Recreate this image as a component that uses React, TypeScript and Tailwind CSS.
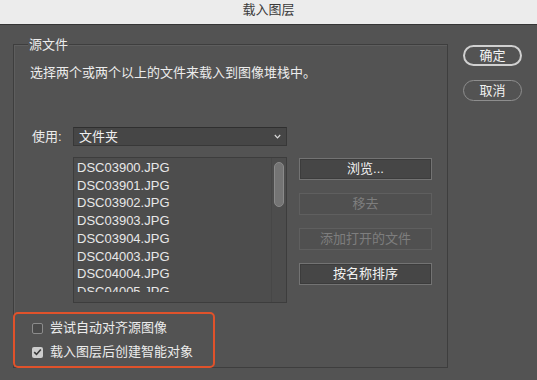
const FONT = "font-['Liberation_Sans','Noto_Sans_CJK_SC',sans-serif]";

const files = [
  "DSC03900.JPG",
  "DSC03901.JPG",
  "DSC03902.JPG",
  "DSC03903.JPG",
  "DSC03904.JPG",
  "DSC04003.JPG",
  "DSC04004.JPG",
  "DSC04005.JPG",
];

function SideButton({ label, disabled }: { label: string; disabled?: boolean }) {
  return (
    <div
      className={
        disabled
          ? "h-[22px] border border-[#5f5f5f] bg-[#505050] flex items-center justify-center text-[13px] text-[#7e7e7e]"
          : "h-[22px] border border-[#737373] bg-[#464646] shadow-[inset_0_0_0_1px_#3c3c3c] flex items-center justify-center text-[13px] text-[#f2f2f2]"
      }
    >
      {label}
    </div>
  );
}

function Check({ checked, label }: { checked?: boolean; label: string }) {
  return (
    <div className="flex items-center h-[18px]">
      {checked ? (
        <div className="w-[11px] h-[11px] rounded-[2px] bg-[#cdcdcd] flex items-center justify-center">
          <svg width="9" height="8" viewBox="0 0 9 8">
            <path d="M1.2 4.2 L3.5 6.4 L7.8 1.4" fill="none" stroke="#3a3a3a" strokeWidth="1.6" />
          </svg>
        </div>
      ) : (
        <div className="w-[11px] h-[11px] rounded-[2px] border border-[#8c8c8c] bg-[#4a4a4a]" />
      )}
      <span className="ml-[7px] text-[13px] leading-[18px] text-[#ececec]">{label}</span>
    </div>
  );
}

export default function App() {
  return (
    <div className={`w-[537px] h-[380px] bg-[#535353] overflow-hidden ${FONT}`}>
      {/* title bar */}
      <div className="h-[25px] bg-[#ececec] border-b border-[#353535] flex items-start justify-center">
        <span className="mt-[1px] text-[13px] leading-[18px] text-[#3a3a3a]">载入图层</span>
      </div>

      <div className="flex pl-[13px] pt-[19px]">
        {/* fieldset */}
        <div className="relative w-[435px] h-[324px] border border-[#3e3e3e] shadow-[inset_1px_1px_0_#5e5e5e]">
          <span className="absolute left-[14px] top-[-9px] px-[1px] bg-[#535353] text-[13px] leading-[18px] text-[#ececec]">
            源文件
          </span>

          <div className="flex flex-col">
            <div className="mt-[19px] ml-[16px] text-[13px] leading-[18px] text-[#ececec]">
              选择两个或两个以上的文件来载入到图像堆栈中。
            </div>

            <div className="mt-[45px] flex items-center h-[19px]">
              <span className="ml-[18px] w-[41px] text-[13px] leading-[18px] text-[#ececec]">使用:</span>
              <div className="w-[214px] h-[19px] bg-[#464646] border border-[#383838] border-t-[#2f2f2f] flex items-center justify-between pl-[5px] pr-[5px]">
                <span className="text-[13px] leading-[17px] text-[#f0f0f0]">文件夹</span>
                <svg width="7" height="5" viewBox="0 0 7 5">
                  <path d="M0.8 1 L3.5 3.8 L6.2 1" fill="none" stroke="#d8d8d8" strokeWidth="1.2" />
                </svg>
              </div>
            </div>

            <div className="mt-[11px] flex">
              <div className="ml-[59px] w-[214px] h-[146px] border border-[#3d3d3d] bg-[#4d4d4d] flex">
                <div className="flex-1 h-[134px] overflow-hidden pl-[3px] pt-[1px]">
                  {files.map((f) => (
                    <div key={f} className="text-[13px] leading-[17.7px] text-[#e8e8e8]">
                      {f}
                    </div>
                  ))}
                </div>
                <div className="w-[15px] border-l border-[#474747] pt-[4px] flex justify-center">
                  <div className="w-[10px] h-[45px] rounded-full bg-[#747474] border border-[#8a8a8a]" />
                </div>
              </div>

              <div className="ml-[12px] w-[133px] pt-[1px] flex flex-col gap-[13px]">
                <SideButton label="浏览..." />
                <SideButton label="移去" disabled />
                <SideButton label="添加打开的文件" disabled />
                <SideButton label="按名称排序" />
              </div>
            </div>

            <div className="mt-[9px] -ml-px w-[202px] h-[56px] rounded-[5px] border-2 border-[#e0522b] pl-[17px] pt-[5px] flex flex-col gap-[6px]">
              <Check label="尝试自动对齐源图像" />
              <Check checked label="载入图层后创建智能对象" />
            </div>
          </div>
        </div>

        {/* right buttons */}
        <div className="ml-[15px] pt-[1px] flex flex-col">
          <div className="w-[59px] h-[21px] rounded-full border-2 border-[#d0d0d0] flex items-center justify-center text-[13px] text-[#f4f4f4]">
            确定
          </div>
          <div className="mt-[14px] w-[59px] h-[21px] rounded-full border-[1.5px] border-[#8e8e8e] flex items-center justify-center text-[13px] text-[#f0f0f0]">
            取消
          </div>
        </div>
      </div>
    </div>
  );
}
